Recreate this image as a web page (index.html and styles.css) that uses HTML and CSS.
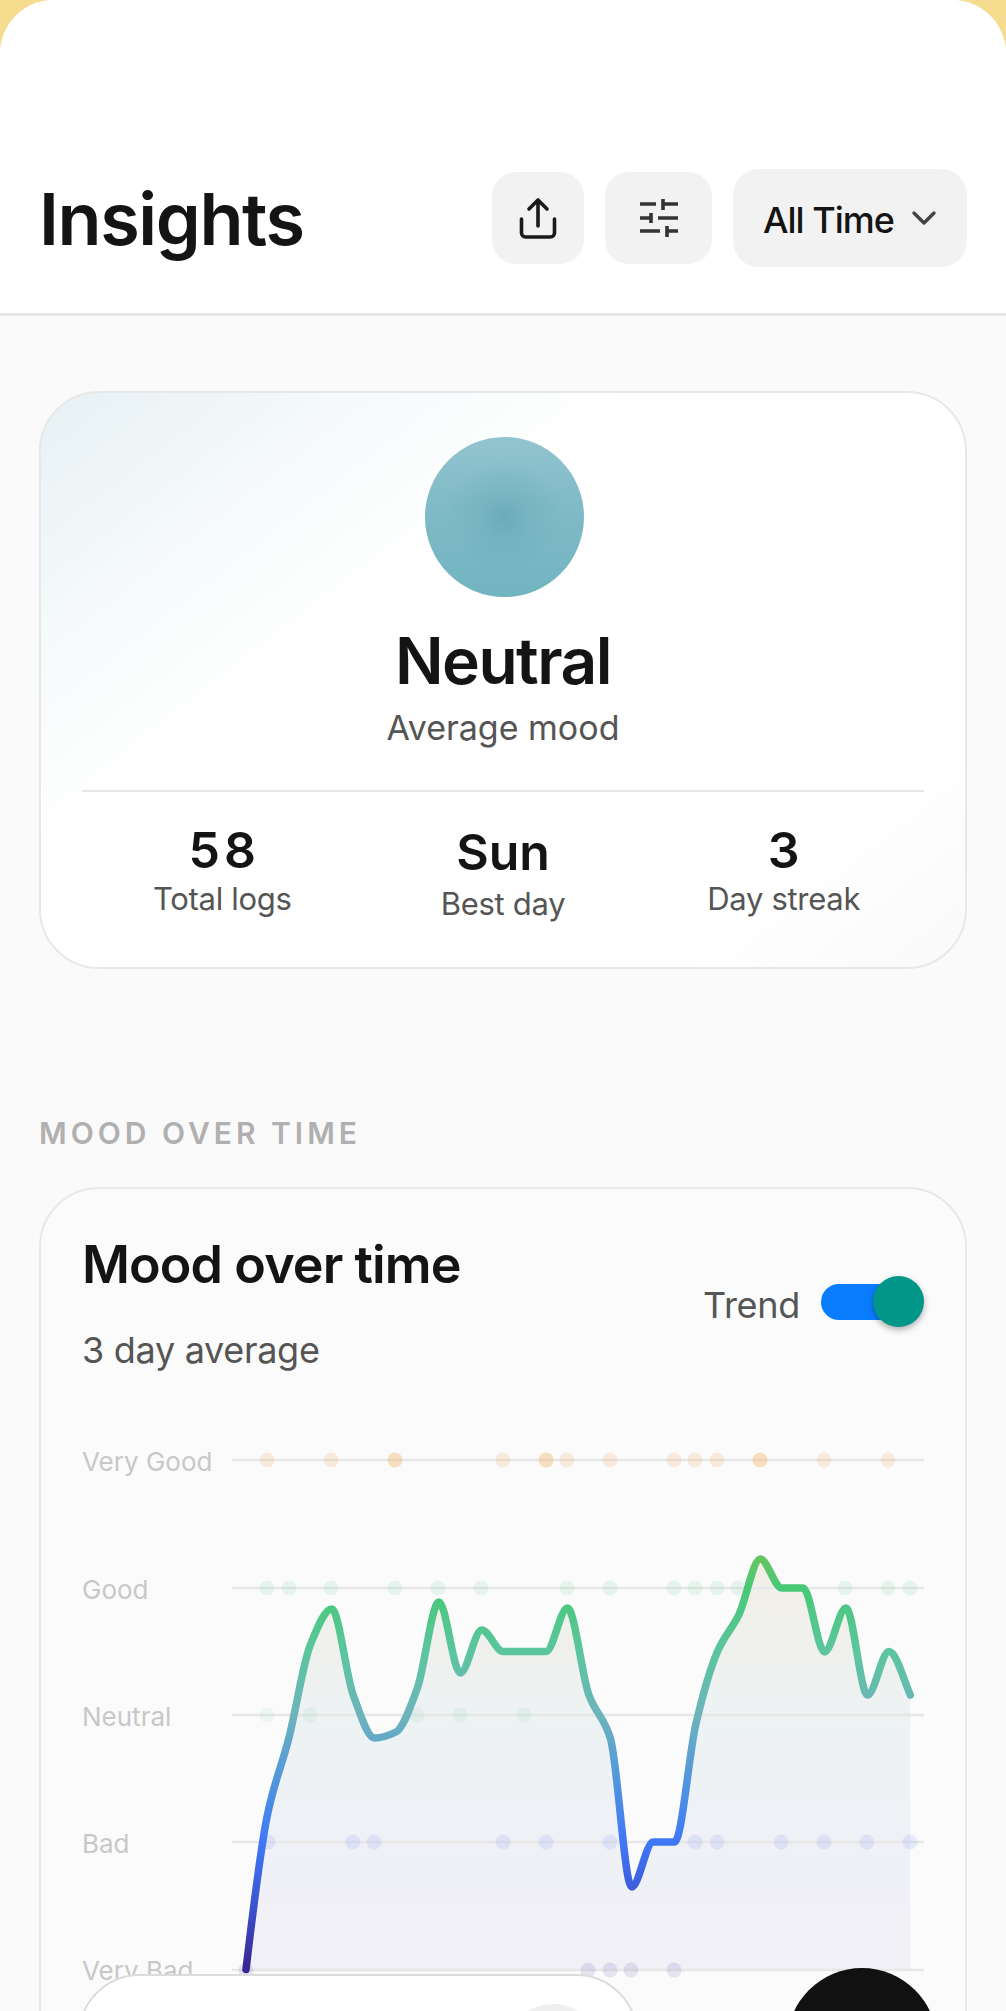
FILE: index.html
```html
<!DOCTYPE html>
<html lang="en">
<head>
<meta charset="utf-8">
<title>Insights</title>
<link rel="stylesheet" href="styles.css">
</head>
<body>
<main class="sheet">
  <header class="header">
    <h1 class="page-title">Insights</h1>
    <div class="actions">
      <button class="icon-btn icon-btn-share" aria-label="Share">
        <svg width="40" height="48" viewBox="0 0 40 48" fill="none" stroke="#1a1a1a" stroke-width="3.6" stroke-linecap="round" stroke-linejoin="round">
          <path d="M20 6V32M11 15L20 6L29 15"/>
          <path d="M3.5 25V39A4 4 0 0 0 7.500 43H32.500A4 4 0 0 0 36.500 39V25"/>
        </svg>
      </button>
      <button class="icon-btn icon-btn-filter" aria-label="Filter">
        <svg width="40" height="40" viewBox="0 0 40 40" fill="none" stroke="#333" stroke-width="3.6">
          <path d="M1 6H17M24 6H39M24 1V12"/>
          <path d="M1 20H12M19 20H39M12 15V25"/>
          <path d="M1 33H21M28 33H39M28 28V39"/>
        </svg>
      </button>
      <button class="range-btn">
        <span class="range-text">All Time</span>
        <svg width="26" height="16" viewBox="0 0 26 16" fill="none" stroke="#444" stroke-width="3.4" stroke-linecap="round" stroke-linejoin="round"><path d="M3 3L13 13L23 3"/></svg>
      </button>
    </div>
  </header>

  <div class="content">
    <section class="card summary">
      <div class="mood-orb"></div>
      <h2 class="mood-name">Neutral</h2>
      <p class="mood-caption">Average mood</p>
      <div class="stats">
        <div class="stat"><div class="stat-value stat-value-wide">58</div><div class="stat-label">Total logs</div></div>
        <div class="stat stat-mid"><div class="stat-value">Sun</div><div class="stat-label">Best day</div></div>
        <div class="stat"><div class="stat-value">3</div><div class="stat-label">Day streak</div></div>
      </div>
    </section>

    <h3 class="section-label">MOOD OVER TIME</h3>

    <section class="card chart-card">
      <div class="chart-head">
        <div>
          <h2 class="chart-title">Mood over time</h2>
          <p class="chart-sub">3 day average</p>
        </div>
        <div class="trend">
          <span class="trend-label">Trend</span>
          <span class="toggle"><span class="toggle-track"></span><span class="toggle-thumb"></span></span>
        </div>
      </div>

      <svg class="chart" width="842" height="580" viewBox="82 1440 842 580" role="img" aria-label="Mood over time chart">
        <defs>
          <linearGradient id="strokeGrad" gradientUnits="userSpaceOnUse" x1="0" y1="1460" x2="0" y2="1970">
            <stop offset="0" stop-color="#f2a24a"/>
            <stop offset="0.18" stop-color="#6dc45e"/>
            <stop offset="0.25" stop-color="#47c976"/>
            <stop offset="0.38" stop-color="#5cc5a0"/>
            <stop offset="0.50" stop-color="#6db4bb"/>
            <stop offset="0.64" stop-color="#4f93e0"/>
            <stop offset="0.75" stop-color="#3f78f7"/>
            <stop offset="0.86" stop-color="#3c58d4"/>
            <stop offset="1" stop-color="#3a2392"/>
          </linearGradient>
          <linearGradient id="fillGrad" gradientUnits="userSpaceOnUse" x1="0" y1="1550" x2="0" y2="1970">
            <stop offset="0" stop-color="#f3eee6"/>
            <stop offset="0.18" stop-color="#f0f0ec"/>
            <stop offset="0.40" stop-color="#edf2f3"/>
            <stop offset="0.70" stop-color="#eff1f6"/>
            <stop offset="1" stop-color="#f1f0f6"/>
          </linearGradient>
        </defs>

        <g class="axis-labels">
          <text x="82" y="1471">Very Good</text>
          <text x="82" y="1599">Good</text>
          <text x="82" y="1726">Neutral</text>
          <text x="82" y="1853">Bad</text>
          <text x="82" y="1980">Very Bad</text>
        </g>

        <path class="area" d="M246 1969.500C253.100 1909.500 260.300 1849.300 267.400 1815C274.500 1780.700 281.800 1766 288.900 1738C296 1710 303.200 1662.300 310.300 1645C317.400 1627.700 324.600 1609 331.700 1609C338.800 1609 346.100 1676 353.200 1695C360.300 1714 367.500 1738 374.600 1738C381.700 1738 388.900 1735.500 396 1732C403.100 1728.500 410.300 1707.300 417.400 1688C424.500 1668.700 431.800 1602 438.900 1602C446 1602 453.200 1673 460.300 1673C467.400 1673 474.600 1630 481.700 1630C488.800 1630 496.100 1651.500 503.200 1651.500L546 1651.500C553.100 1651.500 560.400 1608 567.500 1608C574.600 1608 581.800 1676 588.900 1695C596 1714 603.200 1715.700 610.300 1738C617.400 1760.300 624.600 1887 631.700 1887C638.800 1887 646.100 1842 653.200 1842L674.600 1842C681.700 1842 688.900 1753.500 696 1723.500C703.100 1693.500 710.400 1667.800 717.500 1651.500C724.600 1635.200 731.800 1629.300 738.900 1614.600C746 1599.900 753.200 1559 760.300 1559C767.400 1559 774.600 1588 781.700 1588L803.200 1588C810.300 1588 817.500 1652 824.600 1652C831.700 1652 838.900 1608 846 1608C853.100 1608 860.400 1695 867.500 1695C874.600 1695 881.800 1651.500 888.900 1651.500C896 1651.500 903.200 1678.300 910.300 1695L910.300 1970L246 1970Z"/>

        <g class="grid">
          <path d="M232 1460H924"/>
          <path d="M232 1588H924"/>
          <path d="M232 1715H924"/>
          <path d="M232 1842H924"/>
          <path d="M232 1970H924"/>
        </g>

        <g class="dots dots-vg">
          <circle cx="267" cy="1460" r="7.500"/><circle cx="331" cy="1460" r="7.500"/><circle cx="395" cy="1460" r="7.500"/><circle cx="395" cy="1460" r="7.500"/>
          <circle cx="503" cy="1460" r="7.500"/><circle cx="546" cy="1460" r="7.500"/><circle cx="546" cy="1460" r="7.500"/><circle cx="567" cy="1460" r="7.500"/>
          <circle cx="610" cy="1460" r="7.500"/><circle cx="674" cy="1460" r="7.500"/><circle cx="695" cy="1460" r="7.500"/><circle cx="717" cy="1460" r="7.500"/>
          <circle cx="760" cy="1460" r="7.500"/><circle cx="760" cy="1460" r="7.500"/><circle cx="824" cy="1460" r="7.500"/><circle cx="888" cy="1460" r="7.500"/>
        </g>
        <g class="dots dots-g">
          <circle cx="267" cy="1588" r="7.500"/><circle cx="289" cy="1588" r="7.500"/><circle cx="331" cy="1588" r="7.500"/><circle cx="395" cy="1588" r="7.500"/>
          <circle cx="438" cy="1588" r="7.500"/><circle cx="481" cy="1588" r="7.500"/><circle cx="567" cy="1588" r="7.500"/><circle cx="610" cy="1588" r="7.500"/>
          <circle cx="674" cy="1588" r="7.500"/><circle cx="695" cy="1588" r="7.500"/><circle cx="717" cy="1588" r="7.500"/><circle cx="738" cy="1588" r="7.500"/>
          <circle cx="845" cy="1588" r="7.500"/><circle cx="888" cy="1588" r="7.500"/><circle cx="910" cy="1588" r="7.500"/>
        </g>
        <g class="dots dots-n">
          <circle cx="267" cy="1715" r="7.500"/><circle cx="310" cy="1715" r="7.500"/><circle cx="417" cy="1715" r="7.500"/><circle cx="460" cy="1715" r="7.500"/><circle cx="524" cy="1715" r="7.500"/>
        </g>
        <g class="dots dots-b">
          <circle cx="268" cy="1842" r="7.500"/><circle cx="353" cy="1842" r="7.500"/><circle cx="374" cy="1842" r="7.500"/><circle cx="503" cy="1842" r="7.500"/>
          <circle cx="546" cy="1842" r="7.500"/><circle cx="610" cy="1842" r="7.500"/><circle cx="695" cy="1842" r="7.500"/><circle cx="717" cy="1842" r="7.500"/>
          <circle cx="781" cy="1842" r="7.500"/><circle cx="824" cy="1842" r="7.500"/><circle cx="867" cy="1842" r="7.500"/><circle cx="910" cy="1842" r="7.500"/>
        </g>
        <g class="dots dots-vb">
          <circle cx="246" cy="1970" r="7.500"/><circle cx="588" cy="1970" r="7.500"/><circle cx="610" cy="1970" r="7.500"/><circle cx="631" cy="1970" r="7.500"/><circle cx="674" cy="1970" r="7.500"/>
        </g>

        <path class="line" d="M246 1969.500C253.100 1909.500 260.300 1849.300 267.400 1815C274.500 1780.700 281.800 1766 288.900 1738C296 1710 303.200 1662.300 310.300 1645C317.400 1627.700 324.600 1609 331.700 1609C338.800 1609 346.100 1676 353.200 1695C360.300 1714 367.500 1738 374.600 1738C381.700 1738 388.900 1735.500 396 1732C403.100 1728.500 410.300 1707.300 417.400 1688C424.500 1668.700 431.800 1602 438.900 1602C446 1602 453.200 1673 460.300 1673C467.400 1673 474.600 1630 481.700 1630C488.800 1630 496.100 1651.500 503.200 1651.500L546 1651.500C553.100 1651.500 560.400 1608 567.500 1608C574.600 1608 581.800 1676 588.900 1695C596 1714 603.200 1715.700 610.300 1738C617.400 1760.300 624.600 1887 631.700 1887C638.800 1887 646.100 1842 653.200 1842L674.600 1842C681.700 1842 688.900 1753.500 696 1723.500C703.100 1693.500 710.400 1667.800 717.500 1651.500C724.600 1635.200 731.800 1629.300 738.900 1614.600C746 1599.900 753.200 1559 760.300 1559C767.400 1559 774.600 1588 781.700 1588L803.200 1588C810.300 1588 817.500 1652 824.600 1652C831.700 1652 838.900 1608 846 1608C853.100 1608 860.400 1695 867.500 1695C874.600 1695 881.800 1651.500 888.900 1651.500C896 1651.500 903.200 1678.300 910.300 1695"/>
      </svg>
    </section>
  </div>

  <nav class="dock" aria-label="Tabs"><span class="dock-active"></span></nav>
  <button class="fab" aria-label="Add"></button>
</main>
</body>
</html>
```
FILE: styles.css
```css
* { box-sizing: border-box; }

html, body {
  margin: 0;
  height: 2011px;
  overflow: hidden;
  background: #f6dc8f;
  font-family: Inter, "Liberation Sans", sans-serif;
}

.sheet {
  position: relative;
  height: 2011px;
  display: flex;
  flex-direction: column;
  overflow: hidden;
  background: #fafafa;
  border-radius: 54px 54px 0 0;
}

/* Header */
.header {
  flex: none;
  height: 316px;
  padding: 169px 39px 0 39px;
  display: flex;
  justify-content: space-between;
  align-items: flex-start;
  background: #fff;
  border-bottom: 3px solid #e6e6e6;
}

.page-title {
  margin: 10px 0 0 0;
  font-size: 72px;
  line-height: 80px;
  font-weight: 600;
  letter-spacing: -1.400px;
  color: #141414;
}

.actions {
  display: flex;
  align-items: center;
  gap: 21px;
}

.icon-btn, .range-btn {
  border: 0;
  padding: 0;
  display: flex;
  align-items: center;
  background: #f2f2f2;
  font-family: inherit;
}

.icon-btn { height: 92px; border-radius: 24px; justify-content: center; }
.icon-btn-share { width: 92px; }
.icon-btn-filter { width: 107px; }

.range-btn {
  width: 234px;
  height: 98px;
  padding-left: 30px;
  gap: 17px;
  border-radius: 26px;
  font-size: 36px;
  font-weight: 500;
  letter-spacing: -1px;
  color: #141414;
}

.range-text { padding-top: 4px; }

/* Content */
.content {
  flex: 1;
  padding: 75px 39px 0 39px;
  background: #fafafa;
}

.card {
  border: 2px solid #e8e8e8;
  border-radius: 60px;
}

.summary {
  height: 578px;
  padding: 44px 41px 0 41px;
  display: flex;
  flex-direction: column;
  align-items: center;
  background: linear-gradient(142deg, #e6f1f4 0%, #f6fafb 20%, #ffffff 36%, #ffffff 82%, #f9f9f9 100%);
}

.mood-orb {
  flex: none;
  width: 159px;
  height: 160px;
  margin-left: 2px;
  border-radius: 50%;
  background:
    radial-gradient(circle at 50% 50%, rgba(105, 170, 182, 0.9) 0, rgba(110, 175, 188, 0.5) 22%, rgba(115, 180, 192, 0) 50%),
    linear-gradient(180deg, #92c4cf 0%, #7fbac6 45%, #71b5c1 100%);
}

.mood-name {
  margin: 32px 0 0 0;
  font-size: 64px;
  line-height: 64px;
  font-weight: 600;
  letter-spacing: -1.500px;
  color: #141414;
}

.mood-caption {
  margin: 15px 0 0 0;
  font-size: 34px;
  line-height: 40px;
  color: #555;
}

.stats {
  align-self: stretch;
  margin-top: 42px;
  padding-top: 30px;
  display: grid;
  grid-template-columns: repeat(3, 1fr);
  border-top: 2px solid #e6e6e6;
}

.stat {
  display: flex;
  flex-direction: column;
  align-items: center;
}

.stat-mid { padding-top: 2px; }
.stat-mid .stat-label { margin-top: 6px; }

.stat-value {
  font-size: 50px;
  line-height: 56px;
  font-weight: 600;
  color: #141414;
}

.stat-value-wide { letter-spacing: 4px; margin-right: -4px; }

.stat-label {
  margin-top: 3px;
  font-size: 31px;
  line-height: 36px;
  letter-spacing: -0.300px;
  color: #555;
}

.section-label {
  margin: 146px 0 36px 0;
  font-size: 30px;
  line-height: 36px;
  font-weight: 600;
  letter-spacing: 4px;
  color: #b0b0b0;
}

.chart-card {
  height: 900px;
  padding: 48px 41px 0 41px;
  background: #fbfbfb;
}

.chart-head {
  display: flex;
  justify-content: space-between;
  align-items: flex-start;
}

.chart-title {
  margin: 0;
  font-size: 52px;
  line-height: 56px;
  font-weight: 600;
  letter-spacing: -0.900px;
  color: #141414;
}

.chart-sub {
  margin: 36px 0 0 0;
  font-size: 36px;
  line-height: 42px;
  letter-spacing: -0.300px;
  color: #555;
}

.trend {
  margin-top: 39px;
  display: flex;
  align-items: center;
  gap: 21px;
}

.trend-label {
  padding-top: 6px;
  font-size: 36px;
  line-height: 42px;
  letter-spacing: -0.300px;
  color: #555;
}

.toggle {
  position: relative;
  width: 103px;
  height: 51px;
  display: flex;
  align-items: center;
}

.toggle-track {
  width: 80px;
  height: 36px;
  border-radius: 18px;
  background: #0a7dff;
}

.toggle-thumb {
  position: absolute;
  right: 0;
  top: 0;
  width: 51px;
  height: 51px;
  border-radius: 50%;
  background: #009688;
  box-shadow: 0 3px 6px rgba(0, 0, 0, 0.3);
}

/* Chart */
.chart {
  display: block;
  margin-top: 69px;
}

.axis-labels text {
  font-family: Inter, "Liberation Sans", sans-serif;
  font-size: 26px;
  fill: #c8c8c8;
}

.area { fill: url(#fillGrad); }

.grid path {
  fill: none;
  stroke: #e7e7e7;
  stroke-width: 2.500;
}

.dots-vg circle { fill: #f5a040; opacity: 0.17; }
.dots-g circle { fill: #5ec98a; opacity: 0.12; }
.dots-n circle { fill: #5dbf9c; opacity: 0.09; }
.dots-b circle { fill: #5a74ee; opacity: 0.12; }
.dots-vb circle { fill: #4a3aa8; opacity: 0.12; }

.line {
  fill: none;
  stroke: url(#strokeGrad);
  stroke-width: 7.500;
  stroke-linecap: round;
  stroke-linejoin: round;
}

/* Floating controls */
.dock {
  position: absolute;
  left: 78px;
  top: 1974px;
  width: 560px;
  height: 124px;
  border: 2px solid #dcdcdc;
  border-radius: 62px;
  background: #fff;
}

.dock-active {
  position: absolute;
  left: 423px;
  top: 28px;
  width: 100px;
  height: 100px;
  border-radius: 50%;
  background: #efefef;
}

.fab {
  position: absolute;
  left: 787px;
  top: 1968px;
  width: 150px;
  height: 150px;
  border: 0;
  padding: 0;
  border-radius: 50%;
  background: #111;
}
```
